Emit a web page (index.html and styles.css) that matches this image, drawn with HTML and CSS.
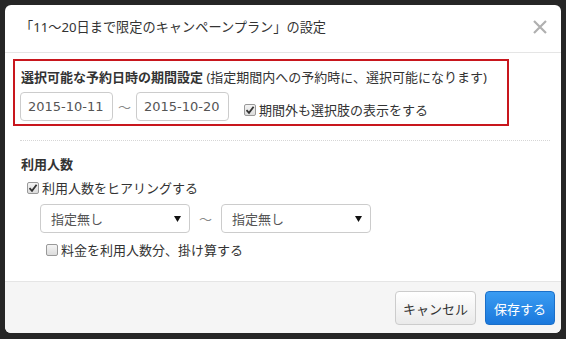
FILE: index.html
```
<!DOCTYPE html>
<html lang="ja">
<head>
    <meta charset="UTF-8">
    <title>プラン設定</title>
    <link rel="stylesheet" href="styles.css">
</head>
<body>
    <div class="modal">
        <div class="modal-header">
            <h4 class="modal-title">「11～20日まで限定のキャンペーンプラン」の設定</h4>
            <span class="close"><svg width="14" height="14" viewBox="0 0 14 14"><path d="M1 1 L13 13 M13 1 L1 13" stroke="#b0b0b0" stroke-width="2.2"/></svg></span>
        </div>
        <div class="modal-body">
            <div class="highlight">
                <div class="label-line"><b>選択可能な予約日時の期間設定</b> (指定期間内への予約時に、選択可能になります)</div>
                <div class="date-row">
                    <input class="form-control date" type="text" value="2015-10-11">
                    <span class="tilde">～</span>
                    <input class="form-control date" type="text" value="2015-10-20">
                    <label class="check outside">
                        <span class="box checked"><svg width="10" height="10" viewBox="0 0 10 10"><path d="M1.5 5.2 L4 7.8 L8.6 1.8" fill="none" stroke="#333" stroke-width="1.8"/></svg></span>期間外も選択肢の表示をする
                    </label>
                </div>
            </div>
            <hr class="dotted">
            <div class="people">
                <div class="section-title">利用人数</div>
                <label class="check hearing">
                    <span class="box checked"><svg width="10" height="10" viewBox="0 0 10 10"><path d="M1.5 5.2 L4 7.8 L8.6 1.8" fill="none" stroke="#333" stroke-width="1.8"/></svg></span>利用人数をヒアリングする
                </label>
                <div class="select-row">
                    <div class="select"><span>指定無し</span><svg class="arrow" width="7" height="6" viewBox="0 0 7 6"><path d="M0 0 H7 L3.5 6 Z" fill="#111"/></svg></div>
                    <span class="tilde">～</span>
                    <div class="select"><span>指定無し</span><svg class="arrow" width="7" height="6" viewBox="0 0 7 6"><path d="M0 0 H7 L3.5 6 Z" fill="#111"/></svg></div>
                </div>
                <label class="check multiply">
                    <span class="box"></span>料金を利用人数分、掛け算する
                </label>
            </div>
        </div>
        <div class="modal-footer">
            <button class="btn btn-default">キャンセル</button>
            <button class="btn btn-primary">保存する</button>
        </div>
    </div>
</body>
</html>
```
FILE: styles.css
```
body{
    margin: 0;
    width: 566px;
    height: 339px;
    background: #262626;
    font-family: "Noto Sans", "Noto Sans CJK JP", sans-serif;
    font-size: 13px;
    color: #333;
    overflow: hidden;
}
.modal{
    margin: 5px;
    width: 556px;
    height: 328px;
    background: #fff;
    border-radius: 6px;
    display: flex;
    flex-direction: column;
    overflow: hidden;
}
.modal-header{
    box-sizing: border-box;
    height: 48px;
    border-bottom: 1px solid #e5e5e5;
    display: flex;
    align-items: center;
    justify-content: space-between;
    padding: 0 14px 4px 15px;
}
.modal-title{
    margin: 0;
    font-size: 13.2px;
    font-weight: normal;
    color: #333;
}
.close svg{
    display: block;
}
.modal-body{
    flex: 1;
    padding: 6px 8px 0;
}
.highlight{
    width: 482px;
    border: 2px solid #c8161d;
    padding: 6px 5px 3px;
}
.label-line{
    line-height: 20px;
    padding-left: 1px;
}
.label-line b{
    font-weight: bold;
}
.date-row{
    display: flex;
    align-items: center;
    margin-top: 5px;
}
.form-control{
    box-sizing: border-box;
    height: 29px;
    border: 1px solid #ccc;
    border-radius: 4px;
    font-family: "DejaVu Sans", "Noto Sans CJK JP", sans-serif;
    font-size: 13px;
    color: #555;
    padding: 0 7px;
    background: #fff;
}
.date{
    width: 93px;
}
.tilde{
    color: #888;
    width: 23px;
    text-align: center;
}
.check{
    display: flex;
    align-items: center;
    line-height: 20px;
}
.box{
    box-sizing: border-box;
    width: 12px;
    height: 12px;
    border: 1px solid #999;
    border-radius: 2px;
    background: linear-gradient(#f4f4f4, #dcdcdc);
    margin-right: 3px;
    display: flex;
    align-items: center;
    justify-content: center;
}
.box svg{
    display: block;
}
.outside{
    margin-left: 15px;
    margin-top: 7px;
}
hr.dotted{
    border: 0;
    border-top: 1px dotted #d6d6d6;
    margin: 14px 3px 0 7px;
}
.people{
    padding-left: 8px;
}
.section-title{
    font-weight: bold;
    line-height: 20px;
    margin-top: 13px;
}
.hearing{
    margin-top: 4px;
    margin-left: 6px;
}
.select-row{
    display: flex;
    align-items: center;
    margin-top: 6px;
    margin-left: 19px;
}
.select{
    box-sizing: border-box;
    width: 150px;
    height: 29px;
    border: 1px solid #ccc;
    border-radius: 4px;
    display: flex;
    align-items: center;
    justify-content: space-between;
    padding: 0 8px 0 10px;
    color: #555;
}
.select-row .tilde{
    width: 31px;
}
.arrow{
    display: block;
}
.multiply{
    margin-top: 7px;
    margin-left: 25px;
}
.modal-footer{
    height: 52px;
    border-top: 1px solid #e5e5e5;
    background: #f5f5f5;
    display: flex;
    justify-content: flex-end;
    align-items: flex-start;
    padding: 9px 6px 0 0;
    box-sizing: border-box;
    gap: 9px;
}
.btn{
    height: 34px;
    border-radius: 4px;
    font-family: inherit;
    font-size: 13px;
    padding: 0;
    white-space: nowrap;
}
.btn-default{
    width: 81px;
    border: 1px solid #ccc;
    background: linear-gradient(#fff, #eaeaea);
    color: #333;
}
.btn-primary{
    width: 70px;
    border: 1px solid #1b6fc8;
    background: linear-gradient(#3a9cf2, #1a78dc);
    color: #fff;
}
```
